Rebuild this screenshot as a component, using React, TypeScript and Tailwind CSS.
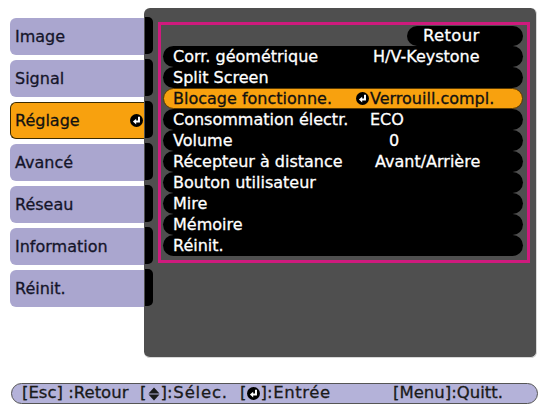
import React from "react";

function EnterIcon({ size = 13, bg = "#000", fg = "#fff" }: { size?: number; bg?: string; fg?: string }) {
  return (
    <svg width={size} height={size} viewBox="0 0 12 12" className="shrink-0">
      <circle cx="6" cy="6" r="6" fill={bg} />
      <path d="M8.3 2.6 V7 H5" stroke={fg} strokeWidth="1.8" fill="none" />
      <path d="M5.7 4.4 L2.7 7 L5.7 9.6 Z" fill={fg} />
    </svg>
  );
}

function UpDown() {
  return (
    <svg width="12" height="14" viewBox="0 0 12 14" className="shrink-0">
      <path d="M6 0.5 L11.5 6.4 H0.5 Z" fill="#1a1a1a" />
      <path d="M0.5 7.6 H11.5 L6 13.5 Z" fill="#1a1a1a" />
    </svg>
  );
}

const tabs = ["Image", "Signal", "Réglage", "Avancé", "Réseau", "Information", "Réinit."];

type Row = { label: string; value?: string; vpad?: string; active?: boolean };
const rows: Row[] = [
  { label: "Corr. géométrique", value: "H/V-Keystone", vpad: "ml-[0px]" },
  { label: "Split Screen" },
  { label: "Blocage fonctionne.", value: "Verrouill.compl.", active: true },
  { label: "Consommation électr.", value: "ECO", vpad: "-ml-[3px]" },
  { label: "Volume", value: "0", vpad: "ml-[16px]" },
  { label: "Récepteur à distance", value: "Avant/Arrière", vpad: "ml-[2px]" },
  { label: "Bouton utilisateur" },
  { label: "Mire" },
  { label: "Mémoire" },
  { label: "Réinit." },
];

export default function App() {
  return (
    <div className="w-[540px] h-[407px] bg-white overflow-hidden font-['DejaVu_Sans',sans-serif] [-webkit-text-stroke:0.3px]">
      <div className="flex pt-[8px] pr-[3px] h-[358px]">
        <div className="w-[134px] ml-[10px] pt-[10px] flex flex-col gap-[5px]">
          {tabs.map((t) =>
            t === "Réglage" ? (
              <div
                key={t}
                className="h-[37px] rounded-l-[6px] bg-[#f8a10e] border border-r-0 border-[#3a2a00] flex items-center justify-between pl-[4px] pr-[1px] text-[16px] text-[#111] leading-none"
              >
                <span>{t}</span>
                <EnterIcon size={13} />
              </div>
            ) : (
              <div
                key={t}
                className="h-[37px] rounded-l-[6px] bg-[#aaa6cf] flex items-center pl-[5px] text-[16px] text-[#15152a] leading-none"
              >
                {t}
              </div>
            )
          )}
        </div>
        <div className="flex-1 bg-[#4f4f4f] rounded-[6px] border-r border-b border-[#d8d8d8] flex">
          <div className="w-[8px] ml-[1px] pt-[9px] flex flex-col gap-[5px]">
            {tabs.map((t) => (
              <div key={t} className="h-[37px] bg-black rounded-r-[5px]" />
            ))}
          </div>
          <div className="flex-1 pl-[5px] pr-[6px] pt-[14px]">
            <div className="h-[241px] border-[3px] border-[#cf1a7d] pl-[2px] pr-[4px] pt-[1px]">
              <div className="flex justify-end">
                <div className="w-[116px] h-[20px] bg-black rounded-full flex items-center pl-[16px] text-[16.5px] text-white leading-none tracking-[0.3px]">
                  Retour
                </div>
              </div>
              <div className="flex flex-col">
                {rows.map((r) =>
                  r.active ? (
                    <div
                      key={r.label}
                      className="h-[21px] bg-[#f8a10e] border border-[#5a3a00] rounded-full flex items-center pl-[9px] text-[16px] text-[#111] leading-none"
                    >
                      <span className="w-[183px] shrink-0">{r.label}</span>
                      <EnterIcon size={13} />
                      <span className="pl-[1px]">{r.value}</span>
                    </div>
                  ) : (
                    <div
                      key={r.label}
                      className="h-[21px] bg-black rounded-full flex items-center pl-[10px] text-[16px] text-white leading-none"
                    >
                      <span className="w-[200px] shrink-0">{r.label}</span>
                      {r.value && <span className={r.vpad}>{r.value}</span>}
                    </div>
                  )
                )}
              </div>
            </div>
          </div>
        </div>
      </div>
      <div className="mt-[25px] ml-[11px] mr-[2px] h-[21px] rounded-full bg-[#b4b2d9] border border-[#555] flex items-center justify-between pl-[10px] pr-[34px] text-[16.5px] text-[#1a1a1a] leading-none">
        <div className="flex items-center">
          <span className="w-[118px]">[Esc] :Retour</span>
          <span className="w-[27px] flex items-center justify-between">
            <span>[</span>
            <UpDown />
            <span>]</span>
          </span>
          <span className="w-[73px] tracking-[0.8px]">:Sélec.</span>
          <span className="w-[27px] flex items-center justify-between">
            <span>[</span>
            <EnterIcon size={13} />
            <span>]</span>
          </span>
          <span className="tracking-[0.6px]">:Entrée</span>
        </div>
        <span>[Menu]:Quitt.</span>
      </div>
    </div>
  );
}
